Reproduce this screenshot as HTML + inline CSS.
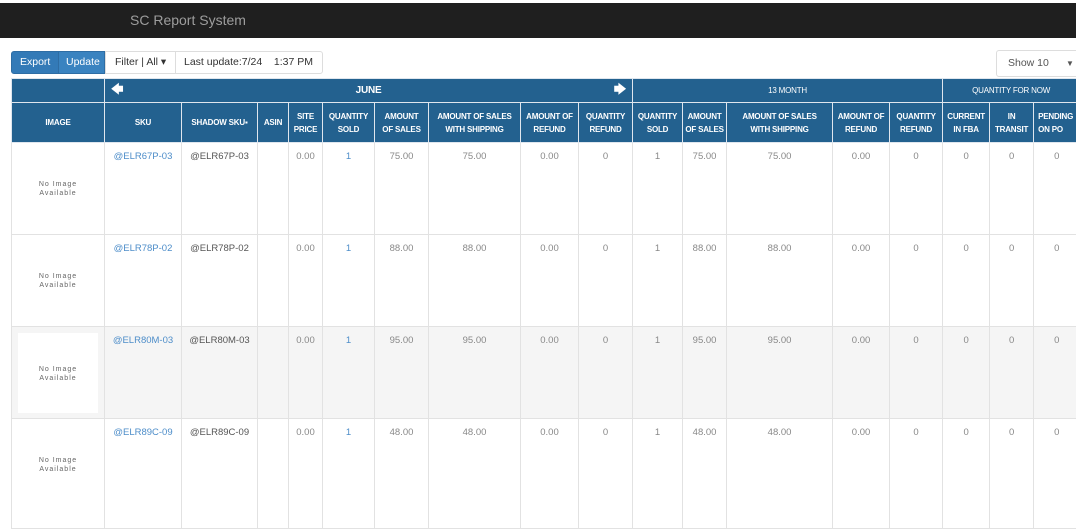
<!DOCTYPE html>
<html><head><meta charset="utf-8"><style>
*{box-sizing:border-box;margin:0;padding:0}
body{width:1076px;height:500px;overflow:hidden;background:#fff;font-family:"Liberation Sans",sans-serif;position:relative}
.top{position:absolute;left:0;top:3px;width:1076px;height:35px;background:#1f1f1f}
.top span{position:absolute;left:130px;top:9px;color:#9d9d9d;font-size:14px}
.tb{position:absolute;top:51px;height:23px;font-size:10.5px;line-height:21px;border:1px solid #ddd;color:#333;white-space:nowrap}
.btn{background:#337ab7;color:#fff;border-color:#2e6da4}
table{position:absolute;left:11px;top:78px;border-collapse:collapse;table-layout:fixed;width:1100px}
th{background:#23618f;color:#fff;font-weight:bold;font-size:8px;letter-spacing:-0.2px;line-height:13px;border:1px solid #dfe6ee;text-align:center;vertical-align:middle;padding:0 1px;white-space:nowrap}
.r1 th{height:24px}
.r2 th{height:40px}
td{border:1px solid #e2e2e2;font-size:9.5px;color:#888;text-align:center;vertical-align:top;padding-top:8px;height:92px}
td.img{vertical-align:middle;padding:0;font-size:7px;letter-spacing:1px;color:#666;line-height:9px}
tr.g td{background:#f5f5f5}
tr.last td{height:110px}
tr.last td.img{padding-bottom:18px}
a{color:#4d8dc9;text-decoration:none}
.q{color:#4d8dc9}
.dk{color:#555}
</style></head><body>
<div class="top"><span>SC Report System</span></div>
<div class="tb btn" style="left:11px;width:48px;padding-left:8px;border-radius:3px 0 0 3px">Export</div>
<div class="tb btn" style="left:58px;width:47px;padding-left:7px;background:#3a83c0">Update</div>
<div class="tb" style="left:105px;width:71px;padding-left:9px">Filter | All ▾</div>
<div class="tb" style="left:175px;width:148px;padding-left:8px;border-radius:0 3px 3px 0">Last update:7/24&nbsp;&nbsp;&nbsp;&nbsp;1:37 PM</div>
<div class="tb" style="left:996px;top:50px;height:27px;width:90px;line-height:25px;padding-left:11px;border-radius:3px;color:#555">Show 10 <span style="position:absolute;left:69px;font-size:8px">▼</span></div>
<table>
<colgroup><col style="width:93px"><col style="width:77px"><col style="width:76px"><col style="width:31px"><col style="width:34px"><col style="width:52px"><col style="width:54px"><col style="width:92px"><col style="width:58px"><col style="width:54px"><col style="width:50px"><col style="width:44px"><col style="width:106px"><col style="width:57px"><col style="width:53px"><col style="width:47px"><col style="width:44px"><col style="width:87px"></colgroup>
<tr class="r1"><th></th><th colspan="9" style="position:relative;font-size:10px"><span style="position:absolute;left:6px;top:4px;font-size:12px">🡄</span>JUNE<span style="position:absolute;right:6px;top:4px;font-size:12px">🡆</span></th><th colspan="5" style="font-weight:normal">13 MONTH</th><th colspan="3" style="text-align:left;padding-left:29px;font-weight:normal">QUANTITY FOR NOW</th></tr>
<tr class="r2"><th>IMAGE</th><th>SKU</th><th>SHADOW SKU▪</th><th>ASIN</th><th>SITE<br>PRICE</th><th>QUANTITY<br>SOLD</th><th>AMOUNT<br>OF SALES</th><th>AMOUNT OF SALES<br>WITH SHIPPING</th><th>AMOUNT OF<br>REFUND</th><th>QUANTITY<br>REFUND</th><th>QUANTITY<br>SOLD</th><th>AMOUNT<br>OF SALES</th><th>AMOUNT OF SALES<br>WITH SHIPPING</th><th>AMOUNT OF<br>REFUND</th><th>QUANTITY<br>REFUND</th><th>CURRENT<br>IN FBA</th><th>IN<br>TRANSIT</th><th style="text-align:left;padding-left:4px">PENDING<br>ON PO</th></tr>
<tr><td class="img">No Image<br>Available</td><td><a>@ELR67P-03</a></td><td class="dk">@ELR67P-03</td><td></td><td>0.00</td><td class="q">1</td><td>75.00</td><td>75.00</td><td>0.00</td><td>0</td><td>1</td><td>75.00</td><td>75.00</td><td>0.00</td><td>0</td><td>0</td><td>0</td><td style="text-align:left;padding-left:20px">0</td></tr>
<tr><td class="img">No Image<br>Available</td><td><a>@ELR78P-02</a></td><td class="dk">@ELR78P-02</td><td></td><td>0.00</td><td class="q">1</td><td>88.00</td><td>88.00</td><td>0.00</td><td>0</td><td>1</td><td>88.00</td><td>88.00</td><td>0.00</td><td>0</td><td>0</td><td>0</td><td style="text-align:left;padding-left:20px">0</td></tr>
<tr class="g"><td class="img"><div style="margin:0 auto;width:80px;height:80px;background:#fff;padding-top:32px">No Image<br>Available</div></td><td><a>@ELR80M-03</a></td><td class="dk">@ELR80M-03</td><td></td><td>0.00</td><td class="q">1</td><td>95.00</td><td>95.00</td><td>0.00</td><td>0</td><td>1</td><td>95.00</td><td>95.00</td><td>0.00</td><td>0</td><td>0</td><td>0</td><td style="text-align:left;padding-left:20px">0</td></tr>
<tr class="last"><td class="img">No Image<br>Available</td><td><a>@ELR89C-09</a></td><td class="dk">@ELR89C-09</td><td></td><td>0.00</td><td class="q">1</td><td>48.00</td><td>48.00</td><td>0.00</td><td>0</td><td>1</td><td>48.00</td><td>48.00</td><td>0.00</td><td>0</td><td>0</td><td>0</td><td style="text-align:left;padding-left:20px">0</td></tr>
</table>
</body></html>
